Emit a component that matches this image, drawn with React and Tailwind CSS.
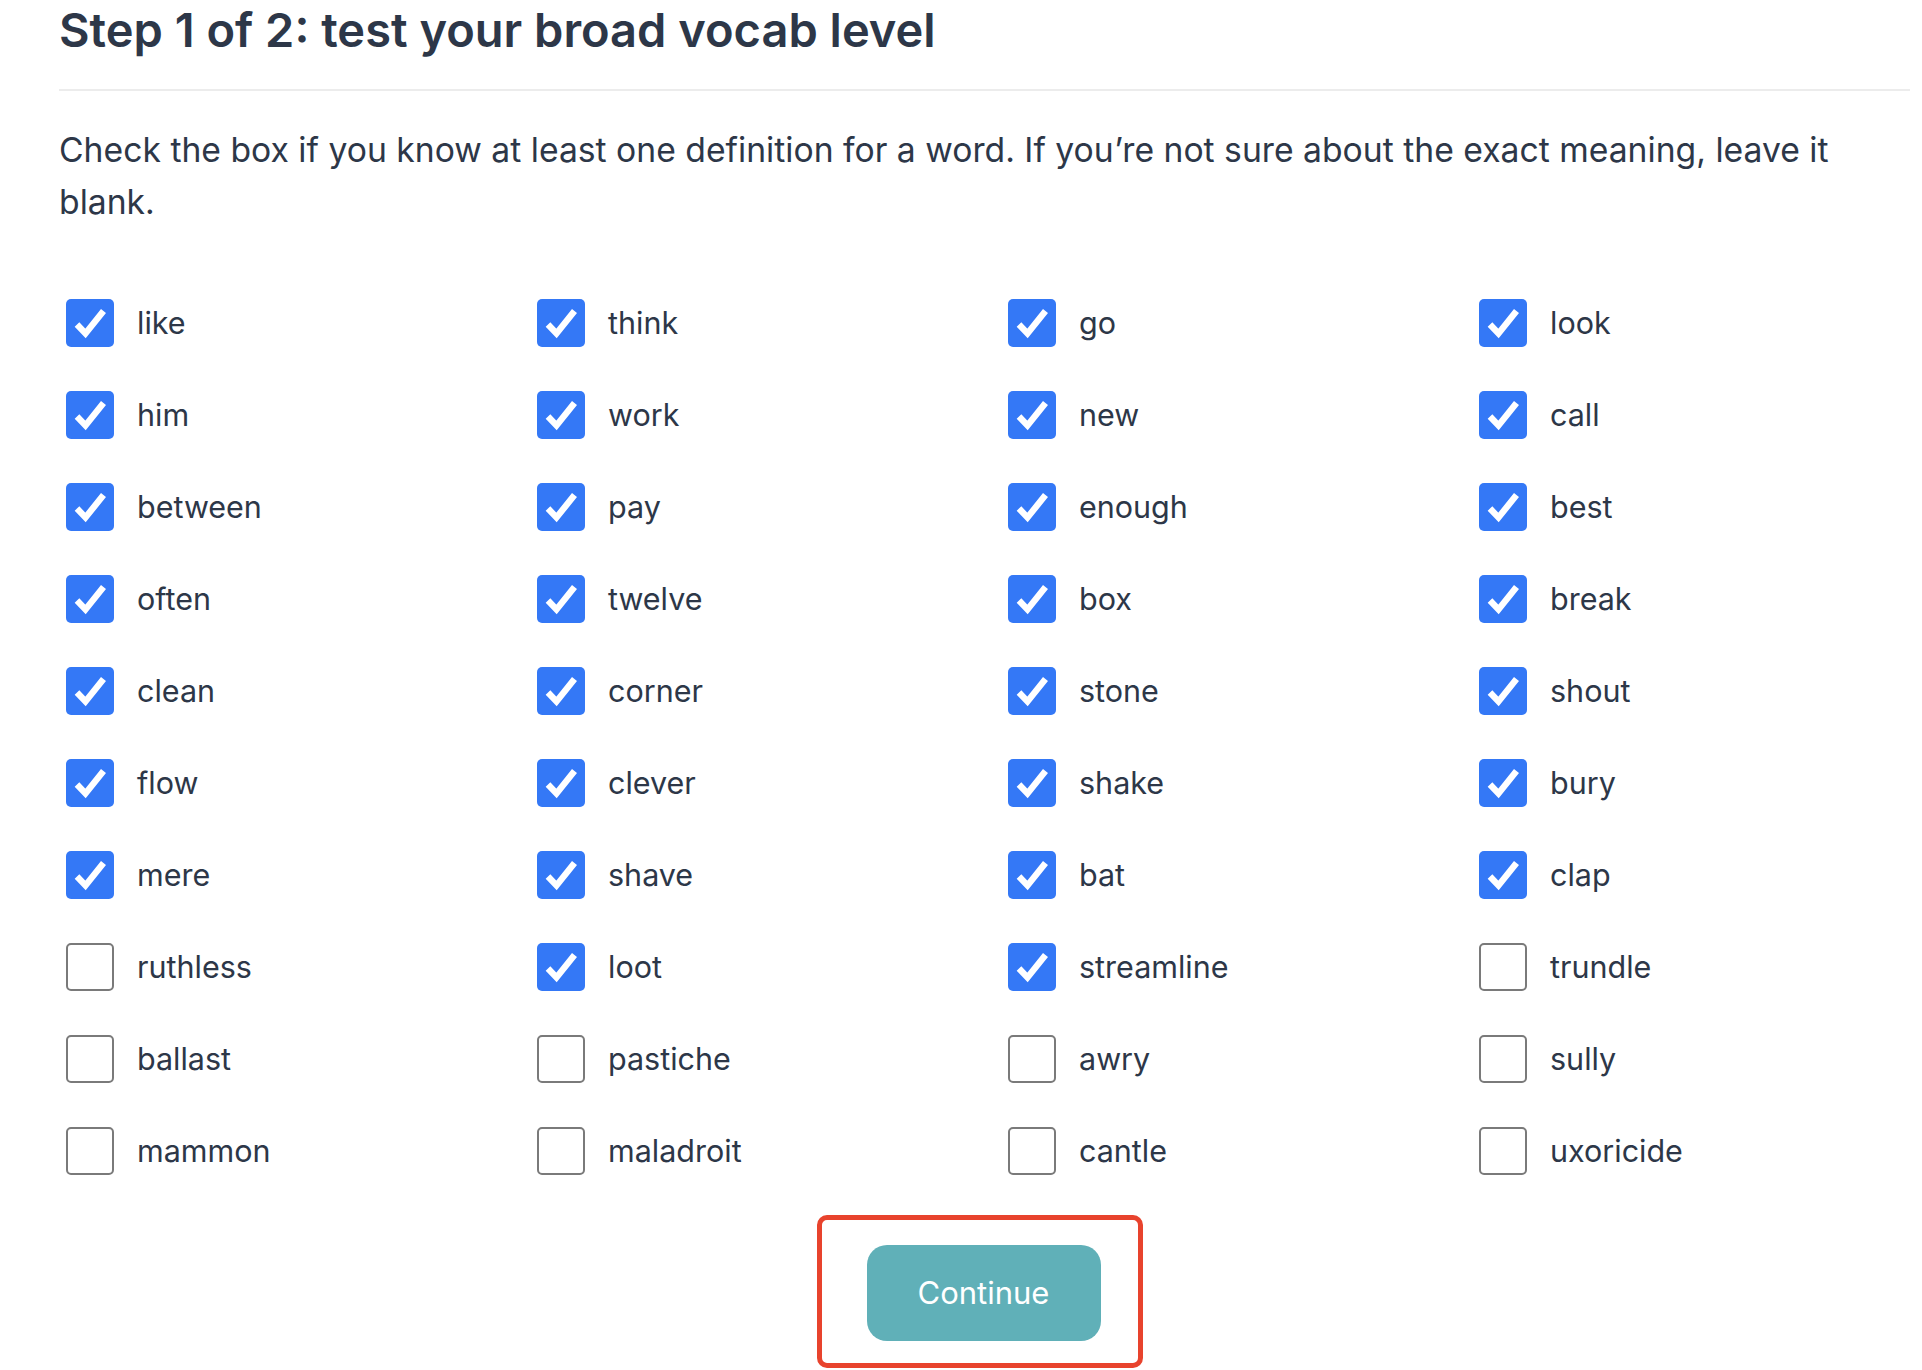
import { useState } from "react";

const COLUMNS = [
  { words: ["like", "him", "between", "often", "clean", "flow", "mere", "ruthless", "ballast", "mammon"], checked: 7 },
  { words: ["think", "work", "pay", "twelve", "corner", "clever", "shave", "loot", "pastiche", "maladroit"], checked: 8 },
  { words: ["go", "new", "enough", "box", "stone", "shake", "bat", "streamline", "awry", "cantle"], checked: 8 },
  { words: ["look", "call", "best", "break", "shout", "bury", "clap", "trundle", "sully", "uxoricide"], checked: 7 },
];

// grid fills row by row, so flatten column lists into rows
const INITIAL = [];
for (let r = 0; r < 10; r++) {
  COLUMNS.forEach(col => {
    INITIAL.push({ word: col.words[r], checked: r < col.checked });
  });
}

function CheckBox({ checked }) {
  if (checked) {
    return (
      <span className="flex h-[48px] w-[48px] flex-shrink-0 items-center justify-center rounded-[5px] bg-[#3478f6]">
        <svg width="48" height="48" viewBox="0 0 48 48" fill="none">
          <path d="M11 25.5 L19.5 34.5 L37.5 12" stroke="#fff" strokeWidth="6.4" strokeLinecap="butt" strokeLinejoin="miter" />
        </svg>
      </span>
    );
  }
  return <span className="h-[48px] w-[48px] flex-shrink-0 rounded-[5px] border-2 border-[#7a7a7a] bg-white" />;
}

export default function App() {
  const [items, setItems] = useState(INITIAL);

  const toggle = idx => {
    setItems(prev => prev.map((it, i) => (i === idx ? { ...it, checked: !it.checked } : it)));
  };

  return (
    <div className="min-h-screen bg-white font-['Inter',sans-serif] text-[#2d3748]">
      <div className="ml-[59px] w-[1851px] pt-[2px]">
        <h1 className="text-[47px] font-semibold leading-[56px]">Step 1 of 2: test your broad vocab level</h1>
        <div className="mt-[31px] h-[2px] bg-[#ececec]" />
        <p className="mt-[33px] text-[33.7px] leading-[52px]">
          Check the box if you know at least one definition for a word. If you’re not sure about the exact meaning, leave it
          <br />
          blank.
        </p>

        <div className="mt-[49px] grid grid-cols-[repeat(4,471px)]">
          {items.map((it, i) => (
            <label key={it.word} onClick={() => toggle(i)} className="flex h-[92px] cursor-pointer items-center gap-[23px] pl-[7px]">
              <CheckBox checked={it.checked} />
              <span className="text-[30.5px] leading-[40px]">{it.word}</span>
            </label>
          ))}
        </div>

        <div className="mt-[18px] flex justify-center">
          <div className="mr-[10px] rounded-[10px] border-[5px] border-[#e8432d] pb-[22px] pl-[45px] pr-[37px] pt-[25px]">
            <button className="h-[96px] w-[234px] rounded-[20px] bg-[#60b0b8] text-[31px] text-white">Continue</button>
          </div>
        </div>
      </div>
    </div>
  );
}
